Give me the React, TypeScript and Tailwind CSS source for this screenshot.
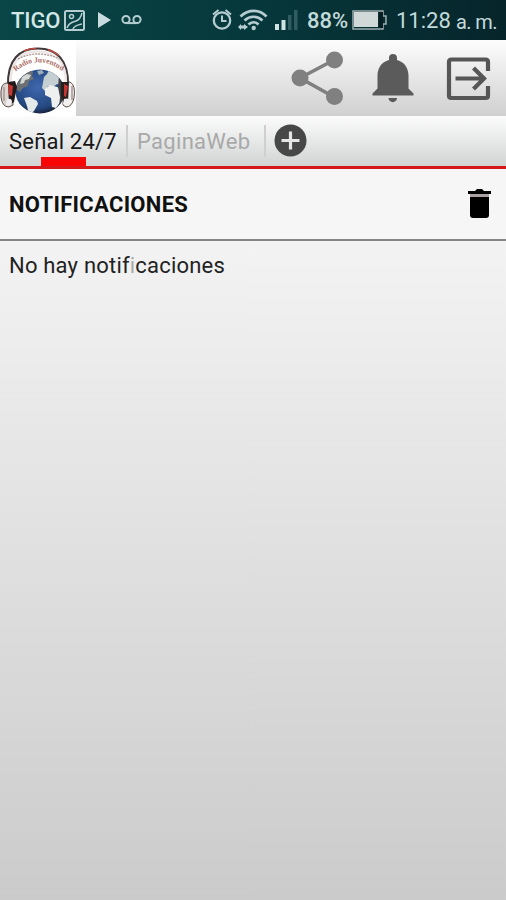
function StatusBar() {
  return (
    <header className="flex h-10 shrink-0 items-center bg-linear-to-r from-[#0a4647] via-[#06383b] to-[#06252b] text-[22px] leading-[26px] text-[#c3dadb]">
      <span className="ml-[11px] w-[53px] pt-[2px] font-medium tracking-[-0.1px] whitespace-nowrap text-[#d3e7e7]">TIGO</span>
      <svg className="h-10 w-[90px] shrink-0" viewBox="64 0 90 40" fill="none" stroke="#b5cdd0" strokeWidth="2">
        <rect x="65" y="11" width="19" height="19" rx="1.5" />
        <circle cx="71.5" cy="16.5" r="2" strokeWidth="1.5" />
        <path d="M67 28c2-6 6-6 9-7 3-1 5-4 6-8M73 29c1-3 4-4 9-5" strokeWidth="1.5" />
        <path d="M98 12v16l13-8z" fill="#c8dce0" stroke="none" />
        <circle cx="126" cy="19.5" r="3.6" />
        <circle cx="137" cy="19.5" r="3.6" />
        <path d="M126 23.1h11" />
      </svg>
      <svg className="ml-[54px] h-10 w-[97px] shrink-0" viewBox="208 0 97 40" fill="none" stroke="#b5cdd0" strokeWidth="2">
        <circle cx="222" cy="20.5" r="8.2" strokeWidth="2.3" />
        <path d="M222 15.5v5.5h4.5M213 14.5l5.5-4.5M231 14.5l-5.5-4.5" />
        <path d="M240.5 16.5c8-7.5 19-7.5 26 0M244.5 20.5c5.5-5 12.500-5 18 0M248.5 24.5c3-3 7-3 10 0" strokeWidth="2.7" />
        <circle cx="253.7" cy="28" r="2.200" fill="#b5cdd0" stroke="none" />
        <path d="M238 27l3-3v1.500h3V24l4 3-4 3v-1.500h-3V30z" fill="#b5cdd0" stroke="none" />
        <path d="M275 24h4v6h-4zM281.5 20h4v10h-4z" fill="#d1e2e4" stroke="none" />
        <path d="M288 15h3.5v15H288zM294 10h3.5v20H294z" fill="#315c60" stroke="none" />
      </svg>
      <span className="ml-[2px] w-[45px] pt-[2px] font-medium whitespace-nowrap">88%</span>
      <svg className="h-10 w-9 shrink-0" viewBox="352 0 36 40">
        <path d="M353 11h30v5h3v8h-3v5h-30z" fill="none" stroke="#9eafb1" strokeWidth="1.5" />
        <path d="M354 12h24v15h-24z" fill="#d0d9d7" />
        <path d="M379 12h4v16h-4z" fill="#071e23" />
      </svg>
      <span className="ml-[8px] w-[60px] pt-[2px] whitespace-nowrap">11:28</span>
      <span className="pt-[3px] text-[20px] tracking-[-0.6px] whitespace-nowrap">a. m.</span>
    </header>
  );
}

function Logo() {
  return (
    <svg className="h-[76px] w-[76px] shrink-0 bg-white" viewBox="0 40 76 76">
      <defs>
        <radialGradient id="sea" cx="45%" cy="40%" r="62%">
          <stop offset="0" stopColor="#3e68ae" />
          <stop offset="0.78" stopColor="#24477f" />
          <stop offset="1" stopColor="#151d30" />
        </radialGradient>
        <clipPath id="globe"><ellipse cx="40" cy="91.5" rx="24.5" ry="22" /></clipPath>
        <path id="nameArc" d="M14 73Q38 51 66 74" />
      </defs>
      <path d="M8 87C7 59 20 48.5 38 48.5s31 11 30 38" fill="none" stroke="#40383a" strokeWidth="2.2" />
      <path d="M10.5 82C11 61 21 51.5 38 51.5s28 10 28 31" fill="none" stroke="#ece7e5" strokeWidth="2.5" />
      <path d="M24 51q6-3 12-2.5M48 49.5q6 2 11 6" fill="none" stroke="#c54b43" strokeWidth="1.5" />
      <path d="M18 59Q38 49 60 59" fill="none" stroke="#a99592" strokeWidth="1.3" strokeDasharray="2 1" />
      <text fontFamily="'Liberation Serif', serif" fontSize="7.5" fontWeight="bold" fill="#a96b62"><textPath href="#nameArc" startOffset="2" textLength="51">Radio Juventud</textPath></text>
      <ellipse cx="40" cy="91.5" rx="24.5" ry="22" fill="url(#sea)" />
      <g clipPath="url(#globe)">
        <path d="M14 88l2-9 6-7 7-3 4 3-1 4 2 3-5 2-1 5-5 2-3 4z" fill="#6d7073" />
        <path d="M22 77l5-3 4 1-2 4-4 1-1 3-4 1z" fill="#d3d8d7" />
        <path d="M24 98l6-1 7 4 1 3-4 7-5 4-2-9z" fill="#e4eaea" />
        <path d="M44 77l3-3 2-4 6 1 6 8 1 7-5-2-4 3-5-1-3 5-3-3z" fill="#c5ced0" />
        <path d="M45 89l5-4 7 2 7 3-1 8-7 10-4-1-1-9-6-3z" fill="#edf0ee" />
        <path d="M37 71l5-1 2 3-5 2z" fill="#9caeb5" />
        <path d="M59 76l6 8v14l-6 10 1-11-2-10z" fill="#3b3f45" />
      </g>
      <path d="M6 83q-6 1-5 14 1 10 8 10l4-2V84z" fill="#dbd5d2" stroke="#5c4d4a" />
      <path d="M70 82q6 3 4 16-2 9-8 9l-3-2V83z" fill="#f1efed" stroke="#5c4d4a" />
      <path d="M8 82l7-1 2 6-3 15-5 3z" fill="#23191a" />
      <path d="M61 82h8l-1 20-4 1-3-6z" fill="#282020" />
      <path d="M8 84l5 2-1 10-3-1zM64 84l4 2-2 11-2-1z" fill="#c43632" />
      <path d="M7 99q5-1 5 3t-6 4zM64 99q5-2 6 3l-4 4-3-2z" fill="#f1efef" />
      <path d="M4 87v14M72 86v14" stroke="#a99691" strokeWidth="1.5" />
    </svg>
  );
}

function Toolbar() {
  return (
    <div className="flex h-[76px] shrink-0 justify-between bg-linear-to-b from-[#fdfdfd] to-[#d0d0d0]">
      <Logo />
      <div className="flex">
        <svg className="h-[76px] w-[66px]" viewBox="284 40 66 76">
          <path d="M334 60l-34 18 34 19" fill="none" stroke="#808080" strokeWidth="3.6" />
          <g fill="#808080"><circle cx="334.5" cy="60" r="8.5" /><circle cx="300" cy="78" r="8.5" /><circle cx="334.5" cy="96.5" r="8.5" /></g>
        </svg>
        <svg className="h-[76px] w-[80px]" viewBox="350 40 80 76" fill="#5b5b5b">
          <path d="M372.5 95.5v-2l5-5V76c0-8 4-14 11.500-16v-2a3.500 3.500 0 018 0v2c7.500 2 11.500 8 11.500 16v12.500l5 5v2zM388.5 98h8.500c0 5.500-8.500 5.500-8.500 0z" />
        </svg>
        <svg className="h-[76px] w-[76px]" viewBox="430 40 76 76" fill="none" stroke="#565656" strokeWidth="4.2">
          <path d="M488 71V62q0-2.500-2.500-2.500h-34q-2.500 0-2.500 2.500v33.500q0 2.500 2.500 2.500h34q2.500 0 2.500-2.500V86" />
          <path d="M455.5 78.5H484M473.5 68l10.5 10.5L473.5 89" />
        </svg>
      </div>
    </div>
  );
}

function Tabs() {
  return (
    <nav className="relative flex h-[53px] shrink-0 border-b-[3px] border-[#d5181c] bg-linear-to-b from-[#fcfcfc] to-[#d2d4d4] text-[22px] leading-[52px]">
      <span className="w-[126px] pl-[9px] tracking-[0.2px] whitespace-nowrap text-[#171717]">Señal 24/7</span>
      <span className="mt-[9px] h-8 w-[2px] bg-[#cfcfcf]" />
      <span className="w-[136px] pl-[9px] tracking-[0.3px] whitespace-nowrap text-[#a9a9a9]">PaginaWeb</span>
      <span className="mt-[9px] h-8 w-[2px] bg-[#cfcfcf]" />
      <svg className="mt-[8px] ml-2 h-[33px] w-[33px]" viewBox="0 0 33 33">
        <circle cx="16.5" cy="16.5" r="16" fill="#474747" />
        <path d="M16.5 7.5v18M7.5 16.5h18" stroke="#e5e5e5" strokeWidth="3.2" />
      </svg>
      <span className="absolute bottom-0 left-[41px] h-[9px] w-[45px] bg-[#fa0505]" />
    </nav>
  );
}

export default function App() {
  return (
    <main className="flex h-[900px] w-[506px] flex-col overflow-hidden bg-[#eee] font-['Roboto',sans-serif]">
      <StatusBar />
      <Toolbar />
      <Tabs />
      <section className="flex h-[72px] shrink-0 items-center justify-between border-b-2 border-[#858585] bg-[#f6f6f6] pl-[9px] text-[#111]">
        <h1 className="text-[22px] font-bold tracking-[0.3px]">NOTIFICACIONES</h1>
        <svg className="h-[70px] w-10" viewBox="466 169 40 70">
          <path d="M468 191h7l2-2h5l2 2h7v3h-23z" />
          <path d="M470 194h19v3h-19z" fill="#aaa1a3" />
          <path d="M470 197h19v18q0 3-3 3h-13q-3 0-3-3z" />
        </svg>
      </section>
      <section className="flex-1 bg-linear-to-b from-[#f3f3f3] to-[#cbcbcb] pt-[9px] pl-[9px] text-[22px] leading-8 text-[#222]">
        <p className="tracking-[0.2px]">No hay notif<span className="text-[#aaa]">i</span>caciones</p>
      </section>
    </main>
  );
}
